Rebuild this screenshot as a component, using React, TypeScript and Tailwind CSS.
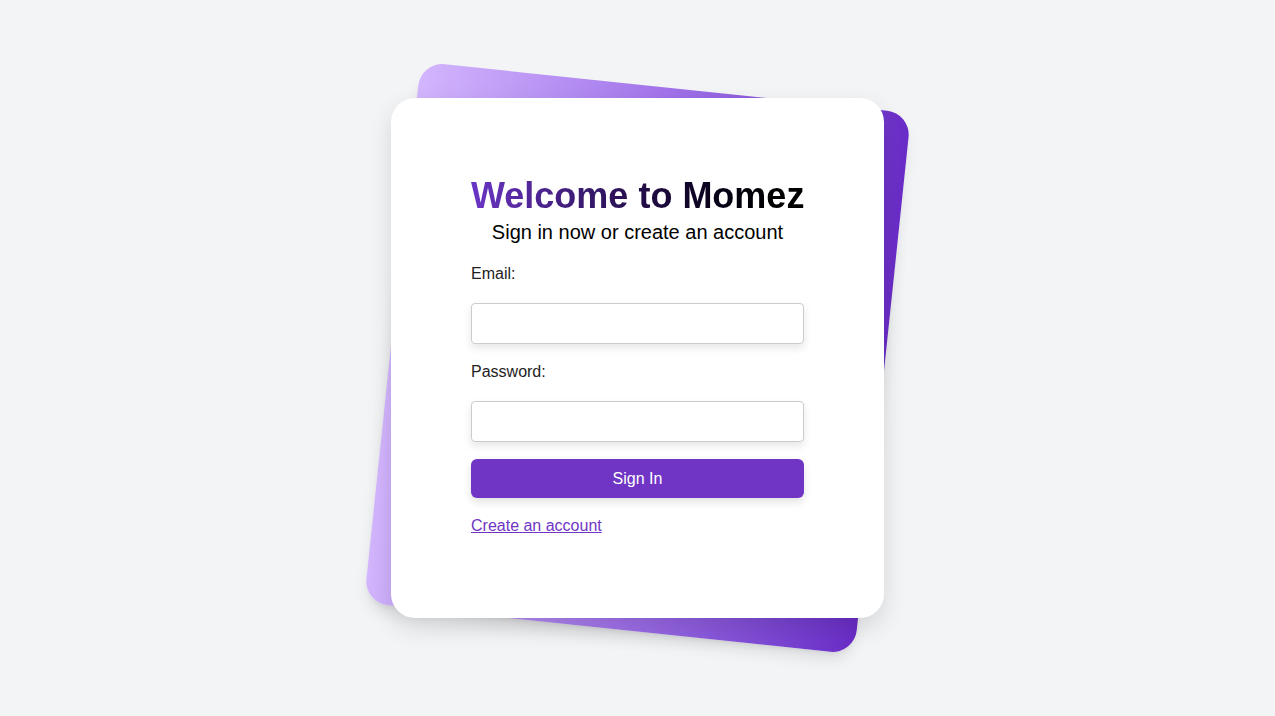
export default function App() {
  return (
    <div className="flex h-[716px] w-full items-center justify-center bg-[#f3f4f6] font-['Liberation_Sans',Arial,sans-serif]">
      <div className="grid place-items-center">
        {/* 뒤쪽 회전 카드 */}
        <div className="col-start-1 row-start-1 h-[544px] w-[493px] rotate-6 rounded-3xl bg-gradient-to-r from-[#d3b5fd] via-[#a273ea] to-[#6a2cc7] shadow-lg"></div>

        {/* 로그인 카드 */}
        <div className="col-start-1 row-start-1 z-10 h-[520px] w-[493px] rounded-3xl bg-white px-20 pt-[78px] shadow-[0_10px_25px_rgba(0,0,0,0.12)]">
          <h1 className="whitespace-nowrap bg-gradient-to-r from-[#6b35c6] to-black bg-clip-text text-center text-4xl leading-[40px] font-bold text-transparent">
            Welcome to Momez
          </h1>
          <p className="mt-[5px] text-center text-xl leading-[23px] text-black">
            Sign in now or create an account
          </p>

          <form className="mt-[21px] flex flex-col" onSubmit={(e) => e.preventDefault()}>
            <label htmlFor="email" className="text-base leading-[18px] text-[#222]">
              Email:
            </label>
            <input
              id="email"
              type="email"
              className="mt-5 h-[41px] w-full rounded border border-[#ccc] bg-white px-3 shadow-[0_4px_8px_rgba(0,0,0,0.1)] outline-none"
            />
            <label htmlFor="password" className="mt-[19px] text-base leading-[18px] text-[#222]">
              Password:
            </label>
            <input
              id="password"
              type="password"
              className="mt-5 h-[41px] w-full rounded border border-[#ccc] bg-white px-3 shadow-[0_4px_8px_rgba(0,0,0,0.1)] outline-none"
            />
            <button
              type="submit"
              className="mt-[17px] h-[39px] w-full rounded-md bg-[#7035c4] text-base text-white shadow-[0_4px_8px_rgba(0,0,0,0.12)]"
            >
              Sign In
            </button>
            <a href="#" className="mt-[19px] self-start text-base leading-[18px] text-[#7035c4] underline">
              Create an account
            </a>
          </form>
        </div>
      </div>
    </div>
  );
}
